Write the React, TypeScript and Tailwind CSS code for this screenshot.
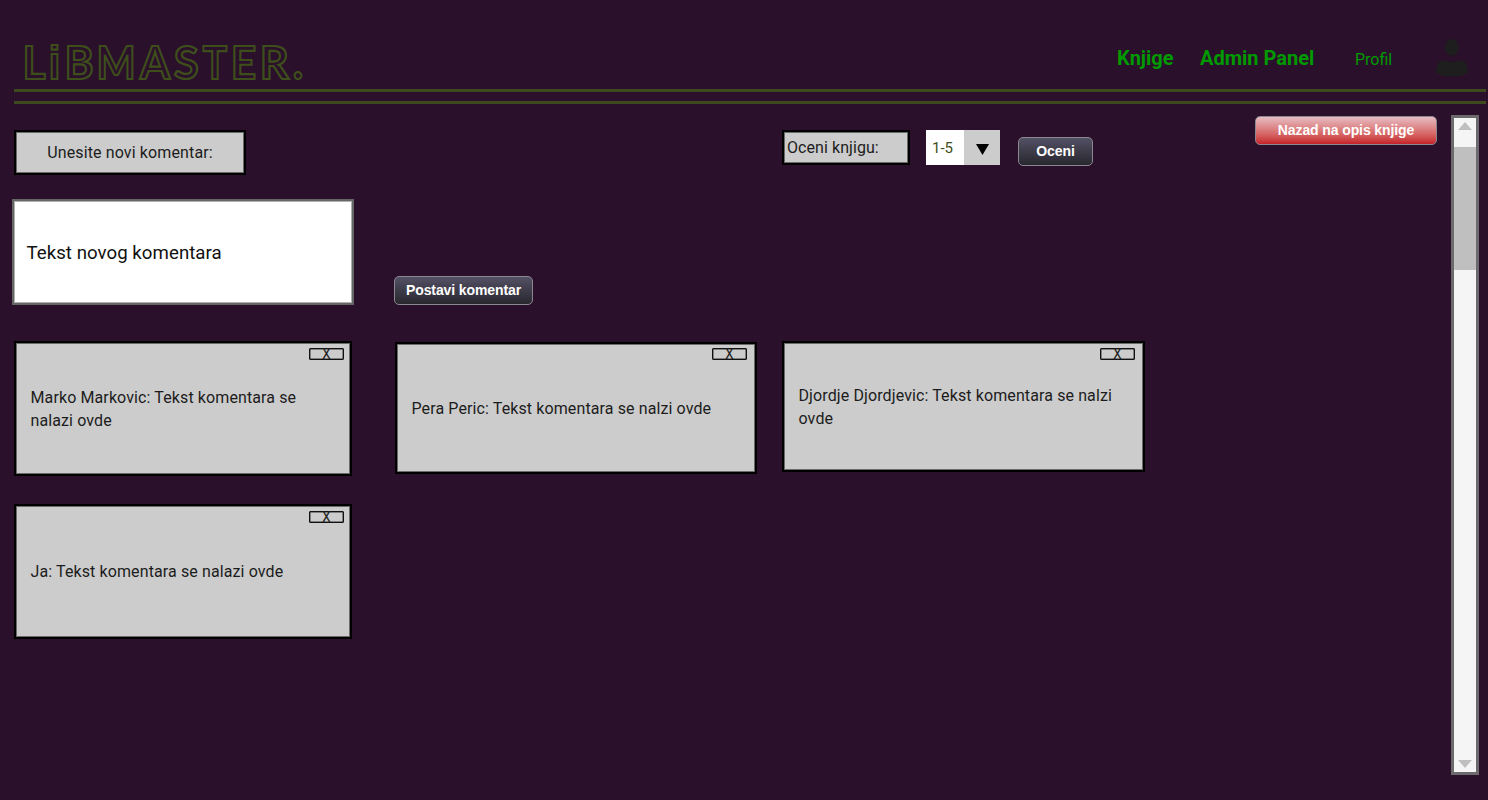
import type { ReactNode } from "react";

type CommentProps = { text: string; className: string; bodyClassName: string; closeClassName: string };

const logoLetters = [
  { char: "L", x: 34, scale: 0.96, font: "Lato" },
  { char: "i", x: 54.5, scale: 0.9, font: "Liberation Sans" },
  { char: "B", x: 79, scale: 0.96, font: "Lato" },
  { char: "M", x: 116, scale: 0.9, font: "Lato" },
  { char: "A", x: 155, scale: 0.94, font: "Lato" },
  { char: "S", x: 186.2, scale: 0.99, font: "Lato" },
  { char: "T", x: 215, scale: 0.88, font: "Lato" },
  { char: "E", x: 243.4, scale: 0.96, font: "Lato" },
  { char: "R", x: 274.2, scale: 0.98, font: "Lato" },
  { char: ".", x: 298, scale: 0.95, font: "Lato" },
];

function Logo() {
  return (
    <svg className="h-[88px] w-[320px] shrink-0" viewBox="0 0 320 88" fill="none" stroke="#3e4e1b" strokeWidth="2.2" textAnchor="middle" fontSize="46" fontWeight="700">
      {logoLetters.map(({ char, x, scale, font }) => (
        <text key={char} transform={`translate(${x} 79) scale(${scale} 1)`} fontFamily={`${font}, sans-serif`}>
          {char}
        </text>
      ))}
    </svg>
  );
}

function Comment({ text, className, bodyClassName, closeClassName }: CommentProps) {
  return (
    <article className={`relative flex shrink-0 items-center border-2 border-black bg-[#ccc] shadow-[inset_0_0_0_1px_#6a6a6a] ${className}`}>
      <button className={`absolute flex h-[12px] w-[35px] items-center justify-center rounded-[1px] border border-[#111] text-[14px] leading-none text-[#222] shadow-[inset_0_0_0_0.5px_#333] ${closeClassName}`}>
        <span className="-mt-px">X</span>
      </button>
      <p className={`ml-[14.5px] text-[16px] leading-[23px] tracking-[0.11px] text-[#1c1c1c] ${bodyClassName}`}>{text}</p>
    </article>
  );
}

function GlossButton({ children, className }: { children: ReactNode; className: string }) {
  return (
    <button className={`flex h-[29px] shrink-0 items-center justify-center whitespace-nowrap rounded-[5px] border border-[#8b8790] bg-linear-to-b font-['Liberation_Sans',sans-serif] text-[14px] font-bold tracking-[-0.11px] text-white ${className}`}>
      {children}
    </button>
  );
}

export default function App() {
  return (
    <div className="flex h-[800px] w-[1488px] flex-col overflow-hidden bg-[#2a102b] font-['Roboto',sans-serif] text-[#1c1c1c]">
      <header className="flex h-[89px] shrink-0 items-start">
        <Logo />
        <nav className="ml-[797px] flex pt-[46px] leading-[24px] text-[#090]">
          <a className="w-[83px] text-[20px] font-bold">Knjige</a>
          <a className="w-[155px] text-[20px] font-bold">Admin Panel</a>
          <a className="w-[80px] pt-[2px] text-[16px]">Profil</a>
        </nav>
        <svg className="mt-[39px] h-[38px] w-[34px]" viewBox="0 0 34 38" fill="#1e1e1e">
          <ellipse cx="16.8" cy="8.5" rx="7" ry="8.2" />
          <path d="M7 21.3Q17 24.5 27 21.3Q33 24 33 33Q30 37.5 17 37.5Q4 37.5 1 33Q1 24 7 21.3Z" />
        </svg>
      </header>
      <div className="ml-[14px] h-[15px] w-[1472px] shrink-0 border-y-[3px] border-[#3c4a1d]" />

      <div className="flex h-[696px]">
        <main className="flex w-[1241px] flex-col pl-[14px] pt-[26px]">
          <div className="flex h-[69px] items-start">
            <div className="mr-[536px] flex h-[45px] w-[232px] items-center justify-center border-2 border-black bg-[#ccc] text-[16px] tracking-[0.13px] shadow-[inset_0_0_0_1px_#6a6a6a]">
              Unesite novi komentar:
            </div>
            <div className="mr-4 flex h-[35px] w-[128px] items-center border-2 border-black bg-[#ccc] pl-[3px] text-[16px] tracking-[0.07px] shadow-[inset_0_0_0_1px_#6a6a6a]">
              Oceni knjigu:
            </div>
            <div className="mr-[18px] flex h-[35px] w-[74px] bg-white">
              <span className="flex w-[38px] items-center pl-[6px] pt-px text-[15px] text-[#3e4e1b]">1-5</span>
              <span className="flex w-[36px] items-center justify-center bg-[#ccc]">
                <svg className="mt-[3px] h-[11px] w-[13px]" viewBox="0 0 13 11"><path d="M0 0H13L6.5 11Z" /></svg>
              </span>
            </div>
            <GlossButton className="mt-[7px] w-[75px] from-[#535165] to-[#29272e]">Oceni</GlossButton>
          </div>
          <div className="-ml-[2px] flex h-[106px] items-end">
            <div className="mr-[40px] flex h-[106px] w-[342px] items-center border-2 border-[#666] bg-white pl-[12.5px] pt-px text-[18.67px] tracking-[0.04px] text-[#111] shadow-[inset_0_0_0_1px_#b0b0b0]">
              Tekst novog komentara
            </div>
            <GlossButton className="w-[139px] from-[#535165] to-[#29272e]">Postavi komentar</GlossButton>
          </div>
          <div className="mt-[36px] flex h-[163px] items-start">
            <Comment text="Marko Markovic: Tekst komentara se nalazi ovde" className="mr-[43px] h-[135px] w-[338px]" bodyClassName="w-[290px]" closeClassName="top-[5px] right-[6px]" />
            <Comment text="Pera Peric: Tekst komentara se nalzi ovde" className="mr-[25px] mt-px h-[132px] w-[362px]" bodyClassName="w-[330px] pt-px" closeClassName="top-[4px] right-[8px]" />
            <Comment text="Djordje Djordjevic: Tekst komentara se nalzi ovde" className="h-[131px] w-[363px]" bodyClassName="w-[320px]" closeClassName="top-[5px] right-[8px]" />
          </div>
          <Comment text="Ja: Tekst komentara se nalazi ovde" className="h-[135px] w-[338px]" bodyClassName="w-[300px]" closeClassName="top-[5px] right-[6px]" />
        </main>
        <aside className="ml-[14px] w-[196px] pt-[12px]">
          <GlossButton className="w-[182px] from-[#e5bcc4] to-[#c51e29]">Nazad na opis knjige</GlossButton>
        </aside>
        <div className="mt-[11px] flex h-[660px] w-[28px] flex-col border-[3px] border-[#6c6a6c] bg-[#f5f5f5]">
          <svg className="ml-1 mt-[4px] h-[8px] w-[14px]" viewBox="0 0 14 8" fill="#bfbfbf"><path d="M7 0L14 8H0Z" /></svg>
          <div className="mt-[17px] h-[123px] bg-[#bfbfbf]" />
          <svg className="mb-[4px] ml-1 mt-auto h-[8px] w-[14px]" viewBox="0 0 14 8" fill="#bfbfbf"><path d="M0 0H14L7 8Z" /></svg>
        </div>
      </div>
    </div>
  );
}
